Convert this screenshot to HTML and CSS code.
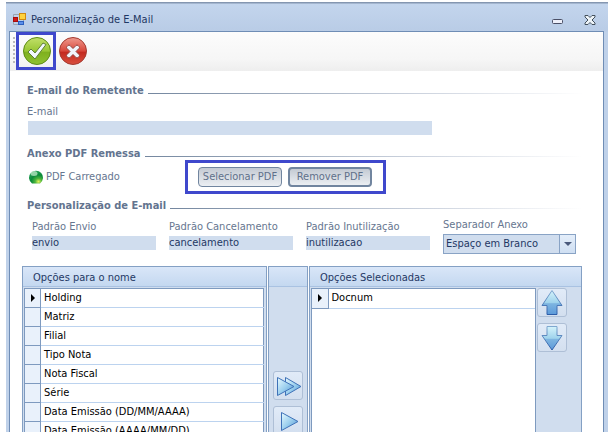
FILE: index.html
```html
<!DOCTYPE html>
<html lang="pt-BR">
<head>
<meta charset="utf-8">
<title>Personalização de E-Mail</title>
<link rel="stylesheet" href="styles.css">
</head>
<body>
<svg width="0" height="0" class="defs" aria-hidden="true">
  <defs>
    <linearGradient id="blue" x1="0" y1="0" x2="1" y2="1"><stop offset="0" stop-color="#e8faff"/><stop offset=".5" stop-color="#9dd0ee"/><stop offset="1" stop-color="#4a8fd0"/></linearGradient>
    <linearGradient id="arrow" x1="0" y1="0" x2="0" y2="1"><stop offset="0" stop-color="#d5f3fb"/><stop offset=".5" stop-color="#9fd3ec"/><stop offset=".55" stop-color="#7db4e0"/><stop offset="1" stop-color="#5c9ada"/></linearGradient>
    <linearGradient id="edge" x1="0" y1="0" x2="0" y2="1"><stop offset="0" stop-color="#7fa8d0"/><stop offset="1" stop-color="#2c5ca8"/></linearGradient>
    <linearGradient id="green" x1="0" y1="0" x2="0" y2="1"><stop offset="0" stop-color="#c2e06a"/><stop offset=".5" stop-color="#98c634"/><stop offset=".55" stop-color="#7fb01e"/><stop offset="1" stop-color="#8fc232"/></linearGradient>
    <linearGradient id="red" x1="0" y1="0" x2="0" y2="1"><stop offset="0" stop-color="#ee9a8e"/><stop offset=".5" stop-color="#d9483c"/><stop offset=".55" stop-color="#c42a20"/><stop offset="1" stop-color="#d9503f"/></linearGradient>
    <radialGradient id="orb" cx=".68" cy=".85" r=".8"><stop offset="0" stop-color="#e4f25c"/><stop offset=".3" stop-color="#4cb53c"/><stop offset=".65" stop-color="#0b8a3a"/><stop offset="1" stop-color="#1f9a50"/></radialGradient>
  </defs>
</svg>
<div class="window">
  <header class="titlebar">
    <svg class="app-icon" width="14" height="14" viewBox="0 0 14 14" aria-hidden="true">
      <path d="M.5 4.500V1.500h6M.5 8.500v3h6M10.500 6v6" stroke="#9aa3b0" fill="none"/>
      <rect x=".5" y="4.500" width="4" height="4" fill="#d01818" stroke="#a80c0c"/>
      <rect x="6.500" y=".5" width="6" height="6" fill="#ffd23c" stroke="#d08a10"/>
      <rect x="5.500" y="8.500" width="5" height="3" fill="#5c90ea" stroke="#2c60c0"/>
    </svg>
    <h1>Personalização de E-Mail</h1>
    <button class="win-btn" aria-label="Minimizar"><svg width="12" height="14" viewBox="0 0 12 14"><rect x=".5" y="6.500" width="10" height="4" rx="1" fill="#eef0fa" stroke="#4a4f66"/></svg></button>
    <button class="win-btn" aria-label="Fechar"><svg width="12" height="14" viewBox="0 0 12 14"><path d="M1 2.500h3l2 2 2-2h3v1.500L8 7l3 3v1.500H8l-2-2-2 2H1V10l3-3-3-3z" fill="#eef4f8" stroke="#43505c"/></svg></button>
  </header>
  <main class="client">
    <div class="toolbar">
      <span class="grip"></span>
      <span class="highlight tick">
        <button class="tool" aria-label="Confirmar"><svg width="30" height="30" viewBox="0 0 30 30"><circle cx="15" cy="15" r="13.500" fill="url(#green)" stroke="#5d8c14"/><path d="M6 16l3-3 4 4 8-10 3 1.500L13 23z" fill="#f3f8ff" stroke="#5f7f38" stroke-linejoin="round"/></svg></button>
      </span>
      <button class="tool" aria-label="Cancelar"><svg width="30" height="30" viewBox="0 0 30 30"><circle cx="15" cy="15" r="13.500" fill="url(#red)" stroke="#a33a30"/><path d="M12 9.500l3 3 3-3q1-1 2 0l1 1q1 1 0 2l-3 3 3 3q1 1 0 2l-1 1q-1 1-2 0l-3-3-3 3q-1 1-2 0l-1-1q-1-1 0-2l3-3-3-3q-1-1 0-2l1-1q1-1 2 0z" fill="#f1f5fb" stroke="#93453f" stroke-linejoin="round"/></svg></button>
    </div>
    <form class="form">
      <h2>E-mail do Remetente</h2>
      <div class="field sender">
        <label for="email">E-mail</label>
        <input id="email" type="text">
      </div>
      <h2>Anexo PDF Remessa</h2>
      <div class="attach">
        <span class="status"><svg width="16" height="16" viewBox="0 0 16 16" aria-hidden="true"><path d="M4 14.500a7 7 0 1 1 8 0z" fill="url(#orb)"/><ellipse cx="6" cy="4.500" rx="3.500" ry="2.500" fill="#c9efd0" opacity=".7"/></svg>PDF Carregado</span>
        <span class="highlight pdf">
          <button type="button" class="btn">Selecionar PDF</button>
          <button type="button" class="btn focus">Remover PDF</button>
        </span>
      </div>
      <h2>Personalização de E-mail</h2>
      <div class="defaults">
        <div class="field"><label for="envio">Padrão Envio</label><input id="envio" type="text" value="envio"></div>
        <div class="field"><label for="canc">Padrão Cancelamento</label><input id="canc" type="text" value="cancelamento"></div>
        <div class="field"><label for="inut">Padrão Inutilização</label><input id="inut" type="text" value="inutilizacao"></div>
        <div class="field combo"><label for="sep">Separador Anexo</label>
          <div class="select"><select id="sep"><option>Espaço em Branco</option></select><span class="drop"><svg width="8" height="4" viewBox="0 0 8 4"><path d="M0 0h8L4 4z" fill="#4a5a7c"/></svg></span></div>
        </div>
      </div>
    </form>
    <div class="panels">
      <section class="panel">
        <h3>Opções para o nome</h3>
        <table>
          <tbody>
            <tr><th><svg width="4" height="8" viewBox="0 0 4 8"><path d="M0 0l4 4-4 4z"/></svg></th><td>Holding</td></tr>
            <tr><th></th><td>Matriz</td></tr>
            <tr><th></th><td>Filial</td></tr>
            <tr><th></th><td>Tipo Nota</td></tr>
            <tr><th></th><td>Nota Fiscal</td></tr>
            <tr><th></th><td>Série</td></tr>
            <tr><th></th><td>Data Emissão (DD/MM/AAAA)</td></tr>
            <tr><th></th><td>Data Emissão (AAAA/MM/DD)</td></tr>
          </tbody>
        </table>
      </section>
      <section class="panel">
        <h3></h3>
        <div class="moves">
          <button class="icon-btn" aria-label="Adicionar todos"><svg width="28" height="26" viewBox="0 0 28 26"><g fill="url(#blue)" stroke="#3f72b8"><path d="M11.500 4.500v18L27 13.500z"/><path d="M3.500 4.500v18L20 13.500z"/></g></svg></button>
          <button class="icon-btn" aria-label="Adicionar"><svg width="28" height="26" viewBox="0 0 28 26"><path d="M7.500 4.500v18L24 13.500z" fill="url(#blue)" stroke="#3f72b8"/></svg></button>
        </div>
      </section>
      <section class="panel">
        <h3>Opções Selecionadas</h3>
        <div class="chosen">
          <div class="grid">
            <table>
              <tbody><tr><th><svg width="4" height="8" viewBox="0 0 4 8"><path d="M0 0l4 4-4 4z"/></svg></th><td>Docnum</td></tr></tbody>
            </table>
          </div>
          <div class="order">
            <button class="icon-btn" aria-label="Mover para cima"><svg width="28" height="27" viewBox="0 0 28 27"><path d="M14 1.500L24 16.500h-5v9H9v-9H4z" fill="url(#arrow)" stroke="url(#edge)"/></svg></button>
            <button class="icon-btn" aria-label="Mover para baixo"><svg width="28" height="27" viewBox="0 0 28 27"><path d="M14 26L24 11.500h-5v-9H9v9H4z" fill="url(#arrow)" stroke="url(#edge)"/></svg></button>
          </div>
        </div>
      </section>
    </div>
  </main>
</div>
</body>
</html>
```
FILE: styles.css
```css
* { box-sizing: border-box; }
body {
  margin: 0;
  height: 100vh;
  overflow: hidden;
  background: #fff;
  color: #1f3864;
  font: 11px/14px "DejaVu Sans Condensed", "Noto Sans", sans-serif;
}
.defs { position: absolute; }
h1, h2, h3 { margin: 0; font-size: 11px; font-weight: normal; }
button, input, select { font: inherit; color: inherit; margin: 0; padding: 0; border: 0; background: none; }
svg { display: block; }

.window {
  display: flex;
  flex-direction: column;
  height: 100vh;
  margin-left: 6px;
  padding: 2px 4px 0 3px;
  background: linear-gradient(#fff 2px, #8496b0 2px, #8496b0 3px, #c3d5ed 4px, #b9cce6 31px, #bfd1e9 32px);
}
.titlebar { display: flex; align-items: center; flex: none; height: 29px; padding: 6px 8px 0 4px; }
.titlebar h1 { flex: 1; margin-left: 4px; }
.win-btn { margin-left: 20px; }

.client {
  display: flex;
  flex-direction: column;
  flex: 1;
  min-height: 0;
  border: 1px solid #6f8db5;
  border-bottom: 0;
  background: #fff;
}
.toolbar {
  display: flex;
  align-items: center;
  flex: none;
  height: 39px;
  padding: 0 0 2px 3px;
  background: linear-gradient(#fcfcfc, #f6f6f6 70%, #eee);
}
.grip { width: 2px; height: 28px; background: repeating-linear-gradient(#bbb 0 2px, transparent 2px 4px); }
.highlight { border: 3px solid #3f48cc; }
.tick { margin: 0 1px; padding: 1px 1px 1px 3px; height: 38px; }
.tool { width: 30px; height: 30px; margin-left: 1px; }
.tick .tool { margin: 0; }

.form { display: flex; flex-direction: column; flex: none; padding: 12px 20px 0 17px; color: #66768f; }
.form h2 { display: flex; align-items: center; gap: 4px; height: 16px; font-weight: bold; color: #63748f; }
.form h2::after { content: ""; flex: 1; height: 1px; margin-top: 4px; background: linear-gradient(90deg, #74879f, #c9d0dc 60%, #fff); }
.field { display: flex; flex-direction: column; gap: 2px; }
.field input { width: 100%; height: 14px; background: #d0ddee; color: #1f3864; }
.sender { width: 404px; padding: 6px 0 11px; }
.sender input { margin-left: 1px; }
.attach { display: flex; align-items: center; height: 36px; padding-bottom: 7px; }
.status { display: flex; align-items: center; gap: 2px; width: 158px; flex: none; padding-left: 1px; }
.pdf { display: flex; gap: 6px; height: 34px; padding: 4px 11px 0 10px; }
.btn {
  width: 84px;
  height: 20px;
  border: 1px solid #71859f;
  border-radius: 4px;
  background: linear-gradient(#c4cad3, #eceff3);
  color: #5f708a;
}
.focus { border-width: 2px; }
.defaults { display: flex; gap: 13px; padding: 6px 7px 0 5px; }
.defaults .field { flex: 0 1 124px; }
.defaults .combo { flex-basis: 133px; margin-top: -2px; }
.select { position: relative; height: 20px; border: 1px solid #89a3c5; background: #d0ddee; }
.select select { appearance: none; width: 100%; height: 18px; padding: 0 18px 0 2px; color: #1f3864; }
.drop {
  position: absolute;
  top: 0;
  right: 0;
  bottom: 0;
  display: grid;
  place-items: center;
  width: 16px;
  border-left: 1px solid #89a3c5;
  background: linear-gradient(#e4eefa, #cfdff2);
  pointer-events: none;
}

.panels {
  display: grid;
  grid-template-columns: 245fr 40px 273fr;
  gap: 1px;
  flex: 1;
  min-height: 0;
  margin: 12px 21px 0 12px;
}
.panel {
  display: flex;
  flex-direction: column;
  min-height: 0;
  overflow: hidden;
  border: 1px solid #84a0c4;
  border-bottom: 0;
  background: #d0ddee;
}
.panel h3 { flex: none; height: 20px; padding: 4px 10px; border-bottom: 1px solid #a9c2e2; background: linear-gradient(#d9e6f8, #c4d8f0); color: #1f3864; }
.panel table { border-collapse: collapse; background: #fff; color: #000; }
.panel > table { margin: 1px 2px 0 1px; border: 1px solid #7e9abf; }
th { width: 16px; height: 19px; padding: 0 0 0 6px; border-right: 1px solid #7e9abf; border-bottom: 1px solid #7e9abf; background: #e9f1fb; }
td { height: 19px; padding: 0 3px; border-bottom: 1px solid #bcd3ef; }
.moves { display: flex; flex-direction: column; gap: 6px; padding: 84px 4px 0; }
.icon-btn { flex: none; width: 30px; height: 29px; border: 1px solid #aebfd6; border-radius: 3px; background: linear-gradient(#e1ebf8, #d3dfef); }
.chosen { display: flex; flex: 1; padding: 1px 14px 0 1px; }
.grid { flex: 1; border: 1px solid #7e9abf; border-bottom: 0; background: #fff; }
.grid table { width: 100%; }
.order { display: flex; flex-direction: column; gap: 6px; padding-left: 1px; }
```
